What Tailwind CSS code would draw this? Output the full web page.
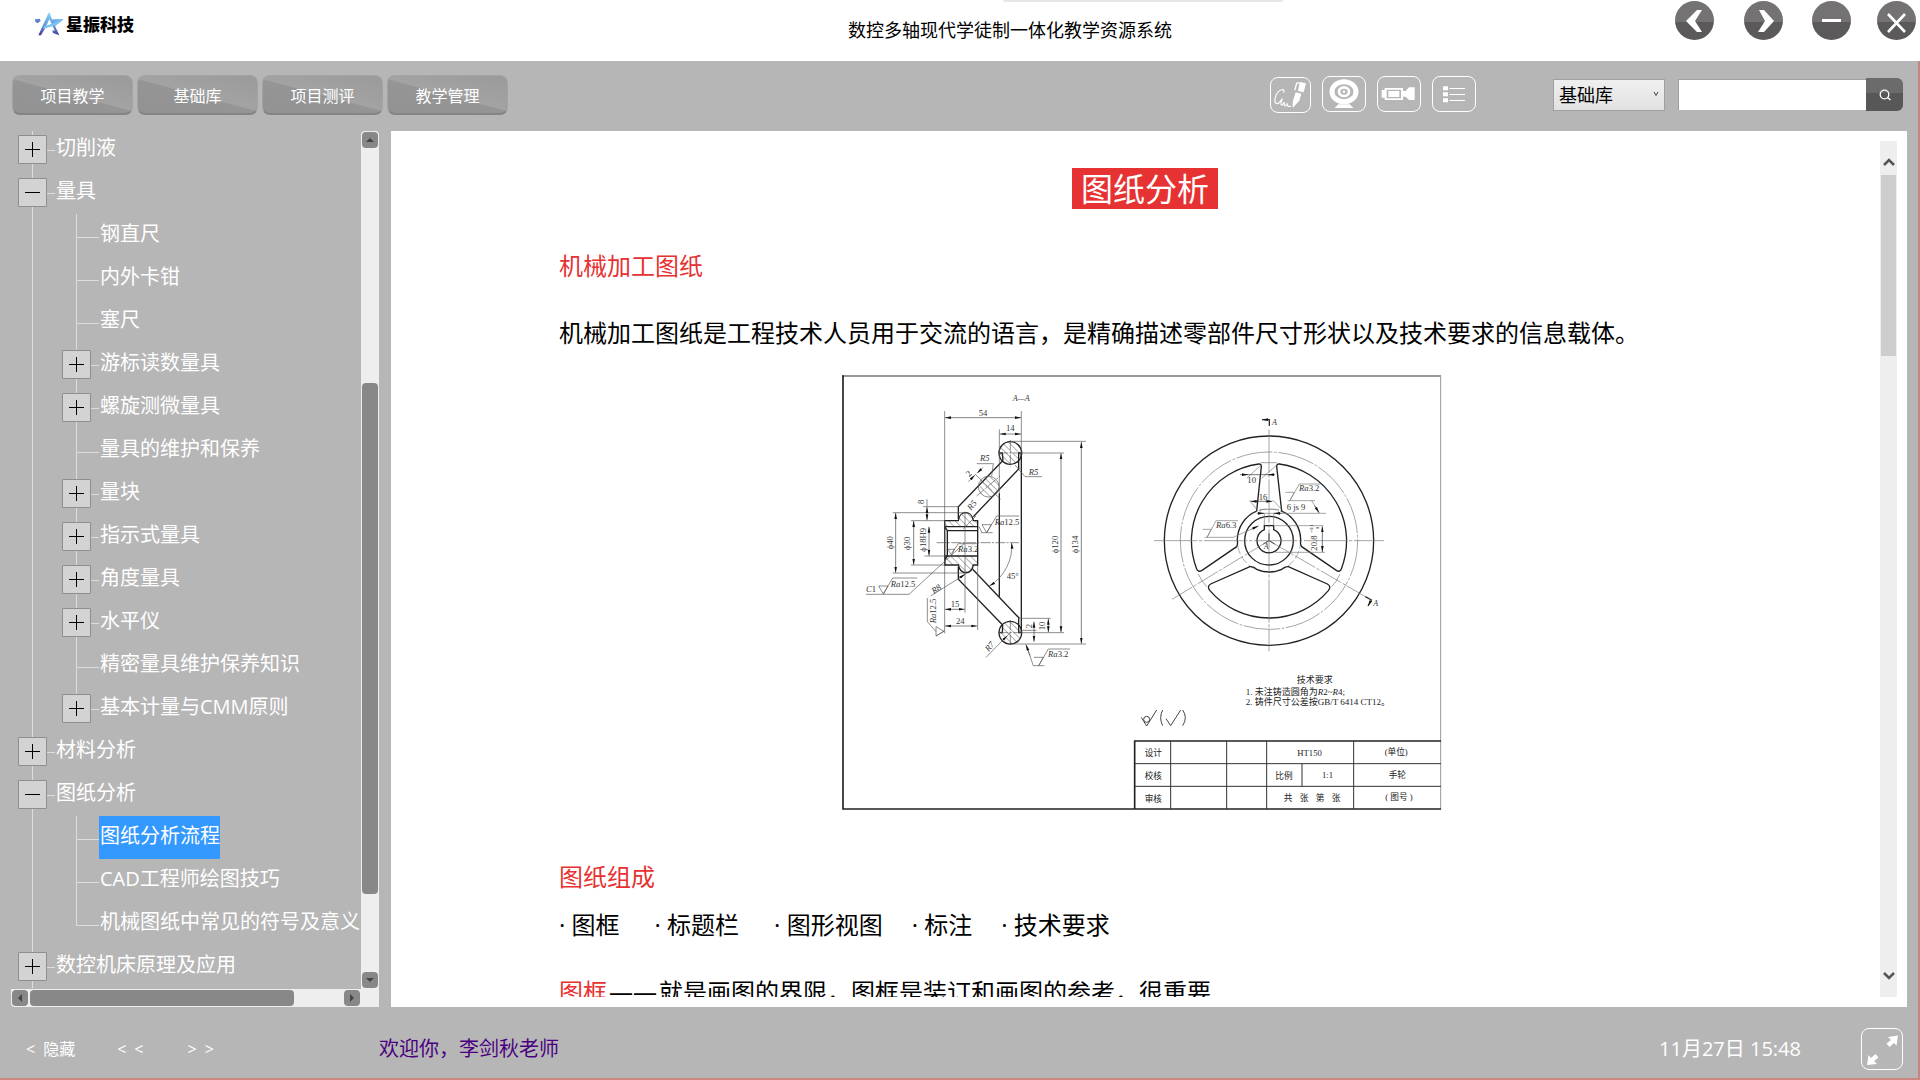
<!DOCTYPE html>
<html lang="zh-CN">
<head>
  <meta charset="UTF-8">
  <meta name="viewport" content="width=device-width, initial-scale=1.0">
  <title>数控多轴现代学徒制一体化教学资源系统</title>
  <script src="https://cdn.jsdelivr.net/npm/@tailwindcss/browser@4"></script>
</head>
<body class="flex h-screen flex-col overflow-hidden border-b-2 border-[#cd8680] bg-[#b6b6b6] font-['Open_Sans','Noto_Sans_CJK_SC',sans-serif]">
  <!-- Header -->
  <header class="relative grid h-[61px] shrink-0 grid-cols-[1fr_auto_1fr] items-start bg-white">
    <div class="absolute top-0 left-[1003px] h-[2px] w-[280px] rounded-b bg-gray-200"></div>
    <a href="#" class="mt-[12px] ml-[35px] flex items-start gap-[2px]">
      <svg class="h-6 w-[29px]" viewBox="0 0 87 72">
        <defs>
          <linearGradient id="star" x1="0" y1="0" x2="0" y2="1">
            <stop offset="0" stop-color="#86dcff"/>
            <stop offset=".55" stop-color="#6a97d8"/>
            <stop offset="1" stop-color="#41399c"/>
          </linearGradient>
        </defs>
        <path d="M43 0L51 22L86 21L60 42L73 70L54 63L52 55L60 56L43 22L31 48L18 70H10L25 37L38 8Z" fill="url(#star)"/>
        <path d="M0 22L14 20L17 27L8 34L1 30Z" fill="#5a86c9"/>
        <path d="M27 42C44 40 62 30 84 22C72 38 50 46 24 50Z" fill="#79c4f2"/>
      </svg>
      <span class="pt-px text-[17px] leading-6 font-black text-black">星振科技</span>
    </a>
    <h1 class="mt-[18px] pl-[100px] text-center text-[18px] leading-6 text-black">数控多轴现代学徒制一体化教学资源系统</h1>
    <div class="mt-px mr-1 flex justify-end">
      <button type="button" aria-label="后退" class="mr-[30px] size-[39px]">
        <svg viewBox="0 0 39 39"><use href="#ball"/><path d="M22 9H27L20 20L27 31H22L11 20Z" fill="#fff"/></svg>
      </button>
      <button type="button" aria-label="前进" class="mr-[29px] size-[39px]">
        <svg viewBox="0 0 39 39"><use href="#ball"/><path d="M15 9H20L30 20L20 31H14L21 20Z" fill="#fff"/></svg>
      </button>
      <button type="button" aria-label="最小化" class="mr-[26px] size-[39px]">
        <svg viewBox="0 0 39 39"><use href="#ball"/><path d="M10 18H29V21H10Z" fill="#fff"/></svg>
      </button>
      <button type="button" aria-label="关闭" class="size-[39px]">
        <svg viewBox="0 0 39 39"><use href="#ball"/><path d="M11 13L28 31M28 13L11 31" stroke="#fff" stroke-width="2.6"/></svg>
      </button>
    </div>
    <svg class="absolute size-0">
      <defs>
        <linearGradient id="ball-fill" x1="0" y1="0" x2="0" y2="1">
          <stop offset=".53" stop-color="#747272"/>
          <stop offset=".53" stop-color="#5b5959"/>
        </linearGradient>
        <circle id="ball" cx="19.5" cy="19.5" r="19.5" fill="url(#ball-fill)"/>
      </defs>
    </svg>
  </header>

  <div class="flex min-h-0 flex-1 flex-col border-r-2 border-[#c48682]">
    <!-- Toolbar -->
    <div class="flex h-[70px] shrink-0 items-start pt-[14px] pr-[15px] pl-[12px]">
      <nav class="flex gap-1 text-[16px] text-white">
        <button type="button" class="h-10 w-[121px] rounded-lg border border-b-2 border-[#a3a3a3] border-b-[#848484] bg-[linear-gradient(195deg,#9a9a9a_0%,#a3a3a3_50%,#959595_52%,#929292_100%)] pt-[2px]">项目教学</button>
        <button type="button" class="h-10 w-[121px] rounded-lg border border-b-2 border-[#a3a3a3] border-b-[#848484] bg-[linear-gradient(195deg,#9a9a9a_0%,#a3a3a3_50%,#959595_52%,#929292_100%)] pt-[2px]">基础库</button>
        <button type="button" class="h-10 w-[121px] rounded-lg border border-b-2 border-[#a3a3a3] border-b-[#848484] bg-[linear-gradient(195deg,#9a9a9a_0%,#a3a3a3_50%,#959595_52%,#929292_100%)] pt-[2px]">项目测评</button>
        <button type="button" class="h-10 w-[121px] rounded-lg border border-b-2 border-[#a3a3a3] border-b-[#848484] bg-[linear-gradient(195deg,#9a9a9a_0%,#a3a3a3_50%,#959595_52%,#929292_100%)] pt-[2px]">教学管理</button>
      </nav>

      <div class="ml-auto flex items-start gap-[11px] pt-px">
        <button type="button" aria-label="签名" class="mt-px h-9 w-[41px] rounded-lg border border-white">
          <svg viewBox="32 36 117 102" fill="none">
            <path d="M70 80C76 66 56 68 47 88C38 112 50 124 66 98C58 120 64 122 72 108C70 122 74 122 80 114C80 124 86 120 92 121" stroke="#fff" stroke-width="3.5"/>
            <path d="M118 48L137 52L130 79L113 75Z" fill="#fff"/>
            <path d="M117 50L109 52L103 73" stroke="#fff" stroke-width="4"/>
            <path d="M106 79L123 83L117 104L97 126V108Z" fill="#fff"/>
          </svg>
        </button>
        <button type="button" aria-label="摄像头" class="h-9 w-11 rounded-lg border border-white">
          <svg viewBox="186 33 126 102" fill="none" stroke="#fff">
            <ellipse cx="249" cy="77" rx="36" ry="30" stroke-width="15"/>
            <ellipse cx="249" cy="77" rx="15" ry="13" stroke-width="8"/>
            <circle cx="249" cy="77" r="4" fill="#fff" stroke="none"/>
            <path d="M232 115H266L277 126H221Z" fill="#fff" stroke="none"/>
          </svg>
        </button>
        <button type="button" aria-label="录像" class="h-9 w-11 rounded-lg border border-white">
          <svg viewBox="352 33 126 102" fill="#fff">
            <path d="M372 66H427V75H435L445 64H462V102H445L435 92H427V102H372V95H363V72H372ZM378 71V97H421V71Z" fill-rule="evenodd"/>
            <path d="M383 75H416V93H383Z"/>
          </svg>
        </button>
        <button type="button" aria-label="列表" class="h-9 w-11 rounded-lg border border-white">
          <svg viewBox="519 33 126 102" fill="#fff">
            <path d="M549 61H564V73H549ZM549 79H564V91H549ZM549 97H564V109H549ZM568 66H615V69H568ZM568 84H615V87H568ZM568 102H615V105H568Z"/>
          </svg>
        </button>
      </div>

      <form class="ml-[77px] flex items-start pt-[3px]">
        <div class="relative mt-px mr-[13px]">
          <select aria-label="分类" class="h-8 w-[112px] appearance-none border border-[#a0a0a0] bg-gradient-to-b from-[#efefef] to-[#e2e2e2] pl-[5px] text-[18px] leading-[28px] text-black">
            <option>基础库</option>
            <option>项目教学</option>
            <option>项目测评</option>
          </select>
          <svg class="pointer-events-none absolute top-[12px] right-[6px] size-[6px]" viewBox="0 0 6 6" fill="none" stroke="#444"><path d="M1 1L3 4.500L5 1"/></svg>
        </div>
        <input type="text" aria-label="搜索" class="mt-px h-[31px] w-[188px] border-t border-l border-[#a0a0a0] bg-white px-2 text-[18px] outline-none">
        <button type="button" aria-label="搜索" class="flex h-[33px] w-[37px] items-center justify-center rounded-r-md bg-[linear-gradient(#6b6b6b_45%,#575757_46%)]">
          <svg class="size-3" viewBox="0 0 12 12" fill="none" stroke="#fff" stroke-width="1.300"><circle cx="5.500" cy="5.500" r="4.300"/><path d="M8.500 8.500L11.500 11"/></svg>
        </button>
      </form>
    </div>

    <!-- Main -->
    <div class="flex min-h-0 flex-1 pr-[11px] pl-[11px]">
      <!-- Tree -->
      <aside class="mr-3 flex w-[368px] shrink-0 flex-col">
        <div class="flex min-h-0 flex-1">
          <div class="flex-1 overflow-hidden">
            <ul id="tree" class="-mt-[3px] text-[20px] whitespace-nowrap text-white"></ul>
          </div>
          <div class="flex w-[18px] flex-col rounded-t-sm bg-[#eee] p-px">
            <button type="button" aria-label="向上" class="flex h-4 items-center justify-center rounded-sm bg-[#888]"><svg class="h-1 w-2" viewBox="0 0 8 4"><path d="M0 4L4 0L8 4Z" fill="#444"/></svg></button>
            <div class="mt-[235px] h-[511px] rounded-sm bg-[#888]"></div>
            <button type="button" aria-label="向下" class="mt-auto flex h-4 items-center justify-center rounded-sm bg-[#888]"><svg class="h-1 w-2" viewBox="0 0 8 4"><path d="M0 0L4 4L8 0Z" fill="#444"/></svg></button>
          </div>
        </div>
        <div class="flex h-[18px] rounded-bl-sm bg-[#eee] py-px pr-[19px] pl-px">
          <button type="button" aria-label="向左" class="flex w-4 items-center justify-center rounded-sm bg-[#888]"><svg class="h-2 w-1" viewBox="0 0 4 8"><path d="M4 0L0 4L4 8Z" fill="#444"/></svg></button>
          <div class="ml-[2px] w-[264px] rounded-sm bg-[#888]"></div>
          <button type="button" aria-label="向右" class="ml-auto flex w-4 items-center justify-center rounded-sm bg-[#888]"><svg class="h-2 w-1" viewBox="0 0 4 8"><path d="M0 0L4 4L0 8Z" fill="#444"/></svg></button>
        </div>
      </aside>

      <!-- Article -->
      <main class="flex min-w-0 flex-1 bg-white p-[10px]">
        <article class="min-w-0 flex-1 overflow-hidden pr-[149px] pl-[158px] text-[24px] leading-9 text-black">
          <h2 class="mx-auto mt-[27px] w-fit bg-[#e63232] px-[9px] text-[32px] leading-[41px] text-white">图纸分析</h2>
          <h3 class="mt-[39px] text-[#e63232]">机械加工图纸</h3>
          <p class="mt-[31px]">机械加工图纸是工程技术人员用于交流的语言，是精确描述零部件尺寸形状以及技术要求的信息载体。</p>
          <figure class="mt-6 pr-[6px]">
            <svg class="mx-auto block w-[600px] max-w-full" viewBox="36 15 1800 1305" fill="none" stroke="#333" stroke-width="2" font-family="'Liberation Serif','Noto Sans CJK SC',serif" font-size="26">
              <defs>
                <marker id="arr" viewBox="0 0 18 10" refX="18" refY="5" markerWidth="18" markerHeight="10" markerUnits="userSpaceOnUse" orient="auto-start-reverse">
                  <path d="M0 1L18 5L0 9Z" fill="#111" stroke="none"/>
                </marker>
                <pattern id="hatch" width="14" height="14" patternUnits="userSpaceOnUse" patternTransform="rotate(-45)">
                  <path d="M0 0V14" stroke="#666" stroke-width="3"/>
                </pattern>
              </defs>
              <!-- frame -->
              <path d="M36 18H1833" stroke="#777" stroke-width="4"/>
              <path d="M1832 18V1317" stroke="#999" stroke-width="3"/>
              <path d="M39 16V1317H1833" stroke="#222" stroke-width="5"/>

              <!-- section A-A -->
              <g stroke="#222" stroke-width="4">
                <circle cx="541" cy="249" r="34" fill="url(#hatch)"/>
                <circle cx="541" cy="788" r="34" fill="url(#hatch)"/>
                <path d="M574 249V788M508 370V680M508 249H517L519 272M574 249H566V295M508 788H517L518 765M574 788H566V745"/>
                <path d="M385 447V410L518 272M430 440L568 295M385 590V628L518 765M428 598L568 745"/>
                <path d="M344 470V452H385C388 420 426 420 430 452H443V470Z" fill="url(#hatch)"/>
                <path d="M344 558H443V585H430C424 616 392 616 385 585H344Z" fill="url(#hatch)"/>
                <path d="M344 470V585M443 470V558M344 470L352 482H443M352 482V558L344 570"/>
              </g>
              <circle cx="476" cy="350" r="31" fill="url(#hatch)" stroke="#555"/>
              <g stroke="#555">
                <path d="M344 123V790M574 123V250M508 178V370M443 585V780M405 425V728" />
                <path d="M320 518H567M541 210V290M505 249H577M541 750V828M505 788H577M435 312L512 388M440 378L510 318" stroke-dasharray="30 4 6 4"/>
                <path d="M574 249H702M574 788H702M541 214H768M541 822H768M568 745H662M574 781H620"/>
                <path d="M188 428H405M280 410H385M243 452H344M243 585H344M188 609H405M283 558H344"/>
                <path d="M291 388V410M440 281H490L485 318M636 320H585L555 285M108 673H237L405 518M302 678L407 612M468 862L541 788M318 798L344 782M438 438L400 476"/>
                <path d="M470 488L500 438H568M454 488H488M447 470L456 488M365 550L385 521H443M160 672L188 624H262M146 648H174L160 672Z"/>
                <path d="M318 785L292 755V684M318 770V798L342 784ZM456 464H484L470 488ZM354 538H374L364 555Z"/>
                <path d="M610 887H643M610 887L588 824M612 862H640L626 887L655 837H720"/>
                <path d="M545 518A140 140 0 0 1 478 648" marker-start="url(#arr)" marker-end="url(#arr)"/>
                <path d="M415 335L435 315" marker-end="url(#arr)"/>
                <path d="M459 292L441 310" marker-end="url(#arr)"/>
                <path d="M520 809L532 797" marker-end="url(#arr)"/>
                <path d="M385 626L405 613" marker-end="url(#arr)"/>
                <path d="M600 857L588 824" marker-end="url(#arr)"/>
              </g>
              <g stroke="#444" marker-start="url(#arr)" marker-end="url(#arr)">
                <path d="M345 143H573"/><path d="M509 192H573"/>
                <path d="M754 216V821"/><path d="M693 250V787"/>
                <path d="M197 429V608"/><path d="M251 453V584"/><path d="M297 470V557"/>
                <path d="M291 411V451"/><path d="M345 718H404"/><path d="M345 768H442"/>
                <path d="M655 746V787"/><path d="M612 755V815"/>
              </g>
              <g fill="#333" stroke="none">
                <text x="548" y="94" font-style="italic" font-size="24">A—A</text>
                <text x="446" y="137">54</text><text x="528" y="183">14</text>
                <text x="450" y="273" font-style="italic">R5</text><text x="596" y="315" font-style="italic">R5</text>
                <text transform="translate(423 422) rotate(-50)" font-style="italic">R5</text>
                <text transform="translate(418 322) rotate(-45)" >2</text>
                <text transform="translate(283 402) rotate(-90)">8</text>
                <text transform="translate(190 538) rotate(-90)">ϕ40</text>
                <text transform="translate(240 540) rotate(-90)">ϕ30</text>
                <text transform="translate(287 545) rotate(-90)">ϕ18H9</text>
                <text transform="translate(684 550) rotate(-90)">ϕ120</text>
                <text transform="translate(744 550) rotate(-90)">ϕ134</text>
                <text x="494" y="464"><tspan font-style="italic">Ra</tspan>12.5</text>
                <text x="384" y="545"><tspan font-style="italic">Ra</tspan>3.2</text>
                <text x="182" y="650"><tspan font-style="italic">Ra</tspan>12.5</text>
                <text x="108" y="667"><tspan font-style="italic">C</tspan>1</text>
                <text x="530" y="626">45°</text>
                <text transform="translate(312 672) rotate(-35)" font-style="italic">R8</text>
                <text transform="translate(319 760) rotate(-90)"><tspan font-style="italic">Ra</tspan>12.5</text>
                <text x="362" y="711">15</text><text x="378" y="762">24</text>
                <text transform="translate(606 775) rotate(-90)">2</text>
                <text transform="translate(645 781) rotate(-90)">10</text>
                <text transform="translate(476 846) rotate(-50)" font-style="italic">R7</text>
                <text x="654" y="860"><tspan font-style="italic">Ra</tspan>3.2</text>
              </g>

              <!-- front view of the handwheel -->
              <g transform="translate(840 0)">
                <circle cx="477" cy="512" r="314" stroke="#222" stroke-width="4"/>
                <circle cx="477" cy="512" r="266" stroke="#777" stroke-dasharray="110 5 8 5"/>
                <circle cx="477" cy="512" r="95" stroke="#888" stroke-dasharray="24 8"/>
                <circle cx="477" cy="512" r="73" stroke="#222" stroke-width="4"/>
                <g stroke="#222" stroke-width="4">
                  <path d="M508 282A233 233 0 0 1 694 597Q690 607 680 602L575 530Q570 524 572 512A95 95 0 0 0 515 423L500 290Q500 281 508 282Z"/>
                  <path d="M446 282A233 233 0 0 0 260 597Q264 607 275 602L380 530Q384 524 382 512A95 95 0 0 1 440 423L454 290Q454 281 446 282Z"/>
                  <path d="M420 590L302 642Q290 649 300 662A233 233 0 0 0 655 662Q665 649 652 642L535 590Q526 588 515 598A95 95 0 0 1 440 598Q430 588 420 590Z"/>
                  <path d="M463 479V467H491V479A36 36 0 1 1 463 479Z"/>
                  <path d="M477 490V512L494 522M477 512L460 522" stroke-width="3"/>
                </g>
                <g stroke="#777">
                  <path d="M132 512H822M477 178V844" stroke-dasharray="130 5 10 5"/>
                  <path d="M477 512L186 688M477 512L768 681" stroke-dasharray="70 5 10 5"/>
                  <path d="M455 283L410 325M500 285L455 325M440 418L418 390M515 418L488 390M452 278H500M450 425V418H505V425"/>
                  <path d="M463 467V430M491 467V430M495 467H640M495 547H645M440 430H648M615 392H533M605 392L627 428M284 502H370L445 468M527 367H553L540 391L568 342H630M278 478H304L291 502L318 452H384"/>
                  <path d="M265 612Q275 635 290 650M690 612Q680 635 665 650"/>
                </g>
                <g stroke="#333">
                  <path d="M390 314H414" marker-end="url(#arr)"/><path d="M410 314H490M495 314H474" marker-end="url(#arr)"/>
                  <path d="M422 394H487" marker-start="url(#arr)" marker-end="url(#arr)"/>
                  <path d="M443 430H462" marker-end="url(#arr)"/><path d="M515 430H492" marker-end="url(#arr)"/>
                  <path d="M425 477L445 468" marker-end="url(#arr)"/><path d="M614 407L627 428" marker-end="url(#arr)"/>
                  <path d="M637 469V546" marker-start="url(#arr)" marker-end="url(#arr)"/>
                  <path d="M478 168V149H456" stroke-width="4" marker-end="url(#arr)"/>
                  <path d="M766 680L784 690L774 708" stroke-width="4" marker-end="url(#arr)"/>
                </g>
                <g fill="#333" stroke="none">
                  <text x="486" y="165" font-style="italic" font-size="24">A</text>
                  <text x="790" y="707" font-style="italic" font-size="24">A</text>
                  <text x="462" y="537" font-style="italic" font-size="22">A</text>
                  <text x="412" y="340">10</text><text x="446" y="389">16</text>
                  <text x="567" y="364"><tspan font-style="italic">Ra</tspan>3.2</text>
                  <text x="530" y="419">6 js 9</text>
                  <text x="318" y="474"><tspan font-style="italic">Ra</tspan>6.3</text>
                  <text transform="translate(622 542) rotate(-90)">20.8</text>
                  <text transform="translate(610 488) rotate(-90)" font-size="14">+0.1</text>
                  <text transform="translate(628 478) rotate(-90)" font-size="14">0</text>
                </g>
              </g>

              <!-- notes and title block -->
              <g transform="translate(840 870)">
                <g stroke="#444" stroke-width="3">
                  <path d="M94 172L110 198L140 150"/><circle cx="110" cy="178" r="9"/>
                  <path d="M158 150Q146 173 158 197M168 176L182 197L212 150M218 150Q234 173 218 197"/>
                </g>
                <path d="M74 447V243H993" stroke="#222" stroke-width="5"/>
                <path d="M74 311H993M74 379H993M182 243V447M350 243V447M470 243V447M731 243V447M576 311V379" stroke="#333" stroke-width="3"/>
                <g fill="#222" stroke="none">
                  <text x="560" y="70" font-size="27">技术要求</text>
                  <text x="407" y="104" font-size="27">1. 未注铸造圆角为<tspan font-style="italic">R</tspan>2~<tspan font-style="italic">R</tspan>4;</text>
                  <text x="407" y="136" font-size="27">2. 铸件尺寸公差按GB/T 6414 CT12。</text>
                  <text x="104" y="288">设计</text><text x="104" y="356">校核</text><text x="104" y="426">审核</text>
                  <text x="562" y="287">HT150</text><text x="496" y="357">比例</text><text x="636" y="355">1:1</text>
                  <text x="521" y="424">共</text><text x="569" y="424">张</text><text x="617" y="424">第</text><text x="665" y="424">张</text>
                  <text x="824" y="286">(单位)</text><text x="836" y="355">手轮</text><text x="826" y="421">( 图号 )</text>
                </g>
              </g>
            </svg>
          </figure>
          <h3 class="mt-[49px] text-[#e63232]">图纸组成</h3>
          <ul class="mt-3 flex">
            <li class="mr-[35px]">· 图框</li>
            <li class="mr-[35px]">· 标题栏</li>
            <li class="mr-[29px]">· 图形视图</li>
            <li class="mr-[29px]">· 标注</li>
            <li>· 技术要求</li>
          </ul>
          <p class="mt-[31px]"><span class="text-[#e63232]">图框</span><span class="mx-[2px]">——</span>就是画图的界限，图框是装订和画图的参考，很重要</p>
        </article>
        <div class="flex w-[17px] shrink-0 flex-col items-center bg-[#eee]">
          <button type="button" aria-label="向上" class="flex h-[34px] w-full items-center justify-center pt-2"><svg class="h-2 w-3" viewBox="0 0 12 8" fill="none" stroke="#555" stroke-width="2.500"><path d="M1 7L6 2L11 7"/></svg></button>
          <div class="h-[181px] w-[15px] bg-[#cdcdcd]"></div>
          <button type="button" aria-label="向下" class="mt-auto flex h-[34px] w-full items-center justify-center pb-2"><svg class="h-2 w-3" viewBox="0 0 12 8" fill="none" stroke="#555" stroke-width="2.500"><path d="M1 1L6 6L11 1"/></svg></button>
        </div>
      </main>
    </div>

    <!-- Footer -->
    <footer class="flex h-[71px] shrink-0 items-center pt-[13px] pr-[15px] pl-[26px] text-white">
      <div class="flex w-[353px] text-[16px]">
        <button type="button" class="mr-[42px] flex gap-2"><span>&lt;</span>隐藏</button>
        <button type="button" class="mr-[44px] flex gap-2"><span>&lt;</span><span>&lt;</span></button>
        <button type="button" class="flex gap-2"><span>&gt;</span><span>&gt;</span></button>
      </div>
      <p class="text-[20px] text-[#4b0082]">欢迎你，李剑秋老师</p>
      <time class="mr-[60px] ml-auto text-[20px]">11月27日 15:48</time>
      <button type="button" aria-label="全屏" class="size-[42px] rounded-lg border border-white">
        <svg class="size-10" viewBox="-1 -1 40 40" fill="#fff">
          <path d="M25 7L35 5.500L33.500 15.500L31 13L26.500 17L23.500 13.500L28 10Z"/>
          <path d="M14 34L4 35L5.500 25L8 28L12.500 24L15.500 27.500L11 31Z"/>
        </svg>
      </button>
    </footer>
  </div>

  <script type="text/javascript">
    // state: "+" collapsed, "-" expanded, "" leaf
    const tree = [
      { text: "切削液", state: "+" },
      { text: "量具", state: "-", children: [
        { text: "钢直尺", state: "" },
        { text: "内外卡钳", state: "" },
        { text: "塞尺", state: "" },
        { text: "游标读数量具", state: "+" },
        { text: "螺旋测微量具", state: "+" },
        { text: "量具的维护和保养", state: "" },
        { text: "量块", state: "+" },
        { text: "指示式量具", state: "+" },
        { text: "角度量具", state: "+" },
        { text: "水平仪", state: "+" },
        { text: "精密量具维护保养知识", state: "" },
        { text: "基本计量与CMM原则", state: "+" },
      ] },
      { text: "材料分析", state: "+" },
      { text: "图纸分析", state: "-", children: [
        { text: "图纸分析流程", state: "", active: true },
        { text: "CAD工程师绘图技巧", state: "" },
        { text: "机械图纸中常见的符号及意义", state: "" },
      ] },
      { text: "数控机床原理及应用", state: "+" },
    ];

    function toggle(item) {
      if (!item.state) {
        return `<span class="mt-[23px] ml-[21px] h-px w-[23px] shrink-0 bg-[#ddd]"></span>`;
      }
      const d = item.state === "+" ? "M7 14.5H22M14.5 7V22" : "M7 14.5H22";
      return `
        <button type="button" aria-label="${item.text}" class="relative mt-[7px] ml-[7px] size-[29px] shrink-0 bg-[#d3d3d3]">
          <svg viewBox="0 0 29 29" fill="none"><path d="M.5 .5H28.500V28.500H.5Z" stroke="#8e8e8e"/><path d="${d}" stroke="#000"/></svg>
        </button>
        <span class="mt-[22px] h-px w-2 shrink-0 bg-[#ddd]"></span>`;
    }

    function renderItem(item, isLast) {
      const line = isLast ? "before:h-[23px]" : "before:h-full";
      const active = item.active ? "bg-[#3399ff]" : "";
      return `
        <li class="relative before:absolute before:top-0 before:left-[21px] before:w-px before:bg-[#ddd] ${line}">
          <div class="flex h-[43px] items-start">
            ${toggle(item)}
            <a href="#" class="h-[43px] pl-px leading-[40px] ${active}">${item.text}</a>
          </div>
          ${item.children ? `<ul class="ml-11">${item.children.map((c, i) => renderItem(c, i === item.children.length - 1)).join("")}</ul>` : ""}
        </li>`;
    }

    document.getElementById("tree").innerHTML = tree.map((item) => renderItem(item, false)).join("");
  </script>
</body>
</html>
